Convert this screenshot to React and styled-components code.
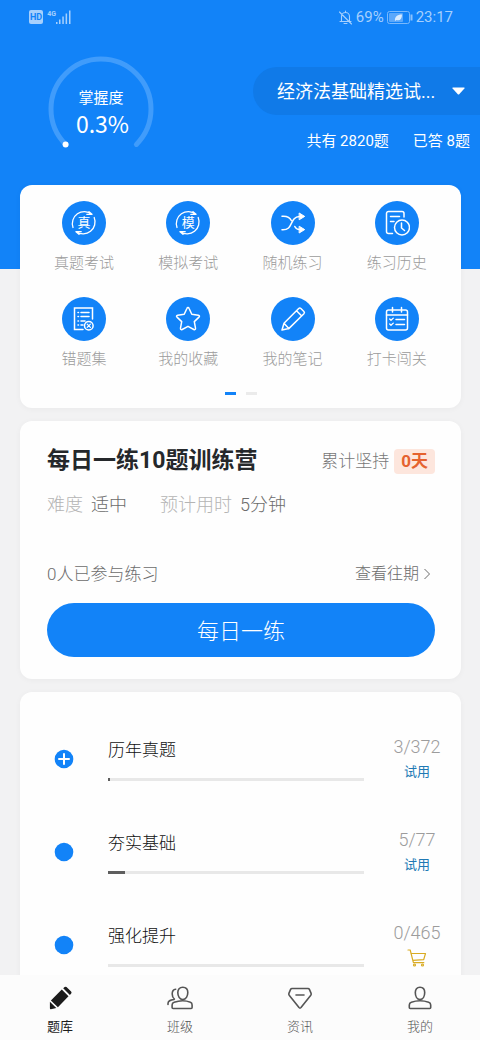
import React from "react";
import styled, { createGlobalStyle } from "styled-components";

const BLUE = "#1283f8";

const GlobalStyle = createGlobalStyle`
  *, *::before, *::after { box-sizing: border-box; }
  body {
    margin: 0;
    background: #f2f2f3;
    font-family: Roboto, "Noto Sans CJK SC", sans-serif;
    color: #222;
  }
  button, select { font-family: inherit; border: 0; margin: 0; padding: 0; background: none; cursor: pointer; }
  a { text-decoration: none; color: inherit; }
  h1, h2, h3, p, ul { margin: 0; padding: 0; font-weight: 400; list-style: none; }
  svg { display: block; }
`;

const Screen = styled.div`
  display: flex;
  flex-direction: column;
  height: 100vh;
`;

const Scroll = styled.main`
  flex: 1;
  min-height: 0;
  overflow-y: auto;
  scrollbar-width: none;
`;

/* ---------- header ---------- */

const Header = styled.header`
  background: ${BLUE};
  color: #fff;
  padding-bottom: 107px;
`;

const StatusBar = styled.div`
  display: flex;
  align-items: center;
  justify-content: space-between;
  height: 34px;
  padding: 0 27px 0 29px;
  color: #a6d0fd;
  font-size: 15px;
  line-height: 20px;
`;

const StatusGroup = styled.div`
  display: flex;
  align-items: center;
  gap: ${(p) => p.$gap}px;
`;

const HeaderRow = styled.div`
  display: flex;
  justify-content: space-between;
  padding: 22px 0 0 48px;
`;

const Gauge = styled.div`
  position: relative;
  width: 106px;
  height: 106px;
`;

const GaugeText = styled.div`
  position: absolute;
  inset: 0;
  display: flex;
  flex-direction: column;
  align-items: center;
  padding-top: 30px;
  font-family: "Noto Sans CJK SC", sans-serif;
`;

const GaugeLabel = styled.span`
  font-size: 15px;
  line-height: 22px;
`;

const GaugeValue = styled.strong`
  padding-left: 3px;
  font-size: 23px;
  line-height: 30px;
  font-weight: 400;
`;

const CourseInfo = styled.div`
  display: flex;
  flex-direction: column;
  width: 227px;
  padding-top: 11px;
`;

const CoursePicker = styled.label`
  display: flex;
  align-items: center;
  height: 48px;
  padding: 0 15px 0 24px;
  border-radius: 24px 0 0 24px;
  background: #107ae8;
`;

const CourseSelect = styled.select`
  flex: 1;
  min-width: 0;
  padding-top: 2px;
  appearance: none;
  color: #fff;
  font-size: 18px;
  line-height: 28px;
  outline: none;
`;

const Stats = styled.div`
  display: flex;
  justify-content: flex-end;
  gap: 24px;
  margin-top: 15px;
  padding-right: 10px;
  font-size: 15px;
  line-height: 22px;
  white-space: nowrap;
`;

/* ---------- cards ---------- */

const Cards = styled.div`
  display: flex;
  flex-direction: column;
  gap: 13px;
  margin-top: -84px;
  padding: 0 19px 20px 20px;
`;

const Card = styled.section`
  background: #fefefe;
  border-radius: 12px;
  padding: ${(p) => p.$pad};
  box-shadow: 0 1px 6px rgba(0, 0, 0, 0.04);
`;

const Shortcuts = styled.nav`
  display: grid;
  grid-template-columns: repeat(4, 1fr);
  row-gap: 23px;
`;

const Shortcut = styled.a`
  display: flex;
  flex-direction: column;
  align-items: center;
  gap: 7px;
  color: #9b9b9b;
  font-size: 15px;
  line-height: 22px;
  font-weight: 300;
`;

const ShortcutDisc = styled.span`
  display: grid;
  place-items: center;
  width: 44px;
  height: 44px;
  border-radius: 50%;
  background: ${BLUE};
  color: #fff;
  > * { grid-area: 1 / 1; }
`;

const DiscGlyph = styled.span`
  font-size: 13px;
  line-height: 18px;
  font-weight: 400;
`;

const Pager = styled.div`
  display: flex;
  justify-content: center;
  gap: 10px;
  margin-top: 22px;
`;

const PagerMark = styled.span`
  width: 11px;
  height: 3px;
  background: ${(p) => (p.$active ? BLUE : "#ebebeb")};
`;

const Row = styled.div`
  display: flex;
  align-items: center;
  justify-content: space-between;
`;

const CampTitle = styled.h2`
  font-size: 23px;
  line-height: 32px;
  font-weight: 700;
  color: #25282b;
`;

const Streak = styled.div`
  display: flex;
  align-items: center;
  gap: 5px;
  font-size: 17px;
  line-height: 25px;
  font-weight: 300;
  color: #777;
`;

const StreakBadge = styled.strong`
  padding: 0 7px;
  border-radius: 4px;
  background: #fde6dd;
  color: #e5622f;
  font-weight: 700;
`;

const Facts = styled.dl`
  display: flex;
  gap: 33px;
  margin: 14px 0 0;
  font-size: 18px;
  line-height: 28px;
  font-weight: 300;
`;

const Fact = styled.div`
  display: flex;
  gap: 8px;
`;

const FactName = styled.dt`
  color: #b4b4b4;
`;

const FactValue = styled.dd`
  margin: 0;
  color: #6c6c6c;
`;

const CampFooter = styled(Row)`
  margin-top: 43px;
  font-size: 17px;
  line-height: 24px;
  font-weight: 300;
  color: #6c6c6c;
`;

const HistoryLink = styled.a`
  display: flex;
  align-items: center;
  gap: 4px;
  padding-right: 4px;
  font-size: 16px;
`;

const PracticeButton = styled.button`
  display: block;
  width: 100%;
  height: 54px;
  margin-top: 17px;
  padding-top: 3px;
  border-radius: 27px;
  background: ${BLUE};
  color: #fff;
  font-size: 22px;
  line-height: 32px;
  font-weight: 300;
`;

/* ---------- chapter list ---------- */

const Chapter = styled.li`
  display: flex;
  align-items: center;
  height: 93px;
`;

const ChapterBody = styled.div`
  flex: 1;
  margin: 0 17px 0 34px;
`;

const ChapterTitle = styled.h3`
  font-size: 17px;
  line-height: 28px;
  font-weight: 300;
  color: #111;
`;

const Track = styled.div`
  height: 3px;
  margin-top: 14px;
  background: #e8e8e8;
`;

const Fill = styled.div`
  height: 3px;
  background: #5e5e5e;
`;

const ChapterSide = styled.div`
  display: flex;
  flex-direction: column;
  align-items: center;
  gap: 3px;
  width: 72px;
`;

const Count = styled.span`
  font-size: 18px;
  line-height: 24px;
  font-weight: 300;
  color: #9c9c9c;
`;

const SideLink = styled.a`
  font-size: 13px;
  line-height: 20px;
  color: #2079b4;
`;

/* ---------- tab bar ---------- */

const TabBar = styled.nav`
  display: grid;
  grid-template-columns: repeat(4, 1fr);
  height: 65px;
  padding-top: 10px;
  background: #fcfcfc;
`;

const Tab = styled.a`
  display: flex;
  flex-direction: column;
  align-items: center;
  gap: 6px;
  font-size: 13px;
  line-height: 20px;
  font-weight: ${(p) => (p.$active ? 400 : 300)};
  color: ${(p) => (p.$active ? "#1c1c1c" : "#555")};
`;

/* ---------- drawings ---------- */

const Line = ({ size = 26, box = 26, width = 1.5, children, ...rest }) => (
  <svg
    width={size}
    height={size}
    viewBox={`0 0 ${box} ${box}`}
    fill="none"
    stroke="currentColor"
    strokeWidth={width}
    strokeLinecap="round"
    strokeLinejoin="round"
    aria-hidden="true"
    {...rest}
  >
    {children}
  </svg>
);

const CycleIcon = ({ glyph }) => (
  <>
    <Line width={1.3}>
      <path d="M2 17.500A12 12 0 0 1 20.800 4.200M21 4.300h-5.200M21 4.300l-3-2.600" />
      <path d="M23.200 7.500A12 12 0 0 1 5.200 21.800M5 21.700h5.200M5 21.700l3 2.600" />
    </Line>
    <DiscGlyph>{glyph}</DiscGlyph>
  </>
);

const ShuffleIcon = () => (
  <Line>
    <path d="M2 6.200c5-.4 8 1.200 9.300 4.300M2 19.800c12 .8 7-12.800 17.500-13.400M14.800 16.500c1 2 2.500 2.900 4.700 3.100" />
    <path d="M19.500 3.200l5.200 3.200-5.200 3.200zM19.500 16.400l5.200 3.200-5.200 3.200z" fill="currentColor" strokeWidth="1" />
  </Line>
);

const HistoryIcon = () => (
  <Line>
    <path d="M8.500 23.500H4.500A2 2 0 0 1 2.500 21.500V3.500A2 2 0 0 1 4.500 1.500H18A2 2 0 0 1 20 3.500V7M6.500 6.500h9M6.500 11.500h3.500" />
    <circle cx="18" cy="17.500" r="7.500" />
    <path d="M17.500 13v5l3 2.500" />
  </Line>
);

const MistakesIcon = () => (
  <Line>
    <path d="M12 23.500H3.500V2H21.500V13" strokeLinejoin="miter" />
    <path d="M7 6.500h.5M10 6.500h8M7 10.500h.5M10 10.500h8M7 15h.5M10 15h4M7 19h.5M10 19h2" />
    <circle cx="17.800" cy="19.800" r="4.300" />
    <path d="M16.200 18.200l3.200 3.200M19.400 18.200l-3.200 3.200" strokeWidth="1.200" />
  </Line>
);

const StarIcon = () => (
  <Line>
    <path d="M13 1.500Q13.700 1.500 14.100 2.500L16.800 8.300L23.300 9.200Q25.200 9.700 24 11.100L19.300 15.600L20.500 22.200Q20.500 24.200 18.800 23.500L13 20.300L7.200 23.500Q5.500 24.200 5.500 22.200L6.700 15.600L2 11.100Q.800 9.700 2.700 9.200L9.200 8.300L11.900 2.500Q12.300 1.500 13 1.500z" />
  </Line>
);

const NotePencilIcon = () => (
  <Line>
    <path d="M2 24l2-6.800L18.700 2.500a1.600 1.600 0 0 1 2.200 0l3 3a1.600 1.600 0 0 1 0 2.200L8.800 22.600zM4 17.200l4.800 5.400M16.500 4.800l5 5" />
  </Line>
);

const CheckInIcon = () => (
  <Line>
    <rect x="2.500" y="4" width="21" height="20" rx="2" />
    <path d="M2.500 9h21M8.500 1.500v4.500M17.500 1.500v4.500M12 13.500h8.500M12 18.500h8.500" />
    <path d="M5.700 13l1.300 1.300 2.300-2.200M5.700 18l1.300 1.300 2.300-2.200" strokeWidth="1.300" />
  </Line>
);

const BulletIcon = ({ expandable }) => (
  <svg width="20" height="20" viewBox="0 0 20 20" aria-hidden="true">
    <circle cx="10" cy="10" r="9.300" fill={BLUE} />
    {expandable && (
      <path d="M10 5v10M5 10h10" stroke="#fff" strokeWidth="2" strokeLinecap="round" />
    )}
  </svg>
);

const CartIcon = () => (
  <Line size={20} box={20} width={1.200} color="#d9ab22">
    <path d="M1 2h2.200l3.200 12.700h10.400M3.900 5.500h14.600l-1.800 6.200-10.900.600" />
    <circle cx="7.500" cy="17" r="1" />
    <circle cx="15.500" cy="17" r="1" />
  </Line>
);

const TabPencilIcon = () => (
  <svg width="26" height="26" viewBox="0 0 26 26" fill="currentColor" aria-hidden="true">
    <path d="M16.200 3.200l1.400-1.200q1-.6 1.900.1l4.600 4.400q.9 1 .1 2l-1.300 1.400zM14.800 4.600l6.700 6.700L10.900 22.300l-7-6.800zM2.900 16.800l6.400 6.200-5.400 1.200q-1.100.1-1-.9z" />
  </svg>
);

const ClassIcon = () => (
  <Line width={1.600}>
    <path d="M15.800 2.200c3.300 0 5 2.200 5 5.300 0 3.500-1.800 7-5 7s-5-3.500-5-7c0-3.100 1.700-5.300 5-5.300z" />
    <path d="M6.100 23.500c-.6 0-1-.4-1-1v-2.400c0-1.400.7-2.400 2-2.800 5.600-2 11.400-2 16.400 0 1.100.4 1.600 1.400 1.600 2.800v2.400c0 .6-.4 1-1 1z" />
    <path d="M8.700 4.200c-2.600.3-3.500 2.200-3.500 4.700 0 2.200.7 3.900 2.200 5.100M7 14.500c-4 .6-6 1.200-6 4v1" />
  </Line>
);

const NewsIcon = () => (
  <Line width={1.600}>
    <path d="M5 3.500h16c.7 0 1.100.3 1.400.9l1.700 4c.3.700.2 1.200-.3 1.800L14 22.600c-.6.7-1.400.7-2 0L2.200 10.200c-.5-.6-.6-1.100-.3-1.800l1.700-4c.3-.6.700-.9 1.400-.9zM9 10h8" />
  </Line>
);

const MeIcon = () => (
  <Line width={1.600}>
    <path d="M13 2.200c3.200 0 4.700 2.200 4.700 5.300 0 3.500-1.600 7-4.700 7s-4.700-3.500-4.700-7c0-3.100 1.500-5.300 4.700-5.300z" />
    <path d="M3.300 23.500c-.6 0-1-.4-1-1v-2.400c0-1.400.7-2.400 2-2.800 5.800-2 11.600-2 17.400 0 1.300.4 2 1.400 2 2.800v2.400c0 .6-.4 1-1 1z" />
  </Line>
);

const HdBadge = styled.span`
  padding: 0 1px;
  border-radius: 2px;
  background: #a6d0fd;
  color: ${BLUE};
  font-size: 9px;
  line-height: 14px;
  font-weight: 700;
`;

const Network = styled.span`
  align-self: flex-start;
  font-size: 7px;
  line-height: 8px;
  font-weight: 700;
`;

const SignalIcon = () => (
  <svg width="15" height="14" viewBox="0 0 15 14" fill="currentColor" aria-hidden="true">
    <path d="M0 12h1.500v2H0zM3 9.500h1.500V14H3zM6.300 6.500h1.500V14H6.300zM9.600 3.500h1.500V14H9.600zM13 .5h1.500V14H13z" />
  </svg>
);

const MutedIcon = () => (
  <Line size={15} box={15} width={1.100}>
    <path d="M2 11.500h11M3.500 11.500V6.500a4 4 0 0 1 8 0v5M7.500 1v1.500M6 13.500h3M1.500 2l12 12" />
  </Line>
);

const BatteryIcon = () => (
  <svg width="26" height="13" viewBox="0 0 26 13" aria-hidden="true">
    <rect x=".5" y=".5" width="22" height="12" rx="2" fill="none" stroke="#7ab9fc" />
    <rect x="2" y="2" width="14" height="9" rx="1" fill="#5ba8fb" />
    <path d="M24.500 3.500v6" stroke="#8cc2fc" strokeWidth="2" />
    <path d="M8 10c-.5-4 2-6.500 7-6.500 0 4.500-2 6.500-5.500 5.500z" fill="#d8ebff" />
  </svg>
);

const GaugeArc = () => (
  <svg width="106" height="106" viewBox="0 0 106 106" fill="none" aria-hidden="true">
    <path
      d="M17.600 88.400A50 50 0 1 1 88.400 88.400"
      stroke="#409cfb"
      strokeWidth="5"
      strokeLinecap="round"
    />
    <circle cx="17.600" cy="88.400" r="3" fill="#fff" />
  </svg>
);

/* ---------- data ---------- */

const shortcuts = [
  { label: "真题考试", icon: <CycleIcon glyph="真" /> },
  { label: "模拟考试", icon: <CycleIcon glyph="模" /> },
  { label: "随机练习", icon: <ShuffleIcon /> },
  { label: "练习历史", icon: <HistoryIcon /> },
  { label: "错题集", icon: <MistakesIcon /> },
  { label: "我的收藏", icon: <StarIcon /> },
  { label: "我的笔记", icon: <NotePencilIcon /> },
  { label: "打卡闯关", icon: <CheckInIcon /> },
];

const chapters = [
  { title: "历年真题", done: 3, total: 372, expandable: true, trial: true },
  { title: "夯实基础", done: 5, total: 77, trial: true },
  { title: "强化提升", done: 0, total: 465 },
];

const tabs = [
  { label: "题库", icon: <TabPencilIcon />, active: true },
  { label: "班级", icon: <ClassIcon /> },
  { label: "资讯", icon: <NewsIcon /> },
  { label: "我的", icon: <MeIcon /> },
];

export default function App() {
  return (
    <Screen>
      <GlobalStyle />
      <Scroll>
        <Header>
          <StatusBar>
            <StatusGroup $gap={4}>
              <HdBadge>HD</HdBadge>
              <StatusGroup $gap={0}>
                <Network>4G</Network>
                <SignalIcon />
              </StatusGroup>
            </StatusGroup>
            <StatusGroup $gap={3}>
              <MutedIcon />
              <span>69%</span>
              <BatteryIcon />
              <span>23:17</span>
            </StatusGroup>
          </StatusBar>
          <HeaderRow>
            <Gauge>
              <GaugeArc />
              <GaugeText>
                <GaugeLabel>掌握度</GaugeLabel>
                <GaugeValue>0.3%</GaugeValue>
              </GaugeText>
            </Gauge>
            <CourseInfo>
              <CoursePicker>
                <CourseSelect aria-label="经济法基础">
                  <option>经济法基础精选试...</option>
                </CourseSelect>
                <svg width="13" height="8" viewBox="0 0 13 8" aria-hidden="true">
                  <path d="M1 .5h11q1 .2.400 1L7.200 7.200q-.7.700-1.400 0L.600 1.500Q0 .7 1 .5z" fill="#fff" />
                </svg>
              </CoursePicker>
              <Stats>
                <span>共有 2820题</span>
                <span>已答 8题</span>
              </Stats>
            </CourseInfo>
          </HeaderRow>
        </Header>

        <Cards>
          <Card $pad="16px 12px 13px">
            <Shortcuts>
              {shortcuts.map((s) => (
                <Shortcut href="#" key={s.label}>
                  <ShortcutDisc>{s.icon}</ShortcutDisc>
                  {s.label}
                </Shortcut>
              ))}
            </Shortcuts>
            <Pager>
              <PagerMark $active />
              <PagerMark />
            </Pager>
          </Card>

          <Card $pad="24px 26px 22px 27px">
            <Row>
              <CampTitle>每日一练10题训练营</CampTitle>
              <Streak>
                累计坚持
                <StreakBadge>0天</StreakBadge>
              </Streak>
            </Row>
            <Facts>
              <Fact>
                <FactName>难度</FactName>
                <FactValue>适中</FactValue>
              </Fact>
              <Fact>
                <FactName>预计用时</FactName>
                <FactValue>5分钟</FactValue>
              </Fact>
            </Facts>
            <CampFooter>
              <span>0人已参与练习</span>
              <HistoryLink href="#">
                查看往期
                <svg width="8" height="12" viewBox="0 0 8 12" fill="none" stroke="currentColor" aria-hidden="true">
                  <path d="M1.500 1l5 5-5 5" />
                </svg>
              </HistoryLink>
            </CampFooter>
            <PracticeButton type="button">每日一练</PracticeButton>
          </Card>

          <Card $pad="20px 8px 20px 34px">
            <ul>
              {chapters.map((c) => (
                <Chapter key={c.title}>
                  <BulletIcon expandable={c.expandable} />
                  <ChapterBody>
                    <ChapterTitle>{c.title}</ChapterTitle>
                    <Track>
                      <Fill style={{ width: `${(c.done / c.total) * 100}%` }} />
                    </Track>
                  </ChapterBody>
                  <ChapterSide>
                    <Count>{`${c.done}/${c.total}`}</Count>
                    <SideLink href="#">{c.trial ? "试用" : <CartIcon />}</SideLink>
                  </ChapterSide>
                </Chapter>
              ))}
            </ul>
          </Card>
        </Cards>
      </Scroll>

      <TabBar>
        {tabs.map((t) => (
          <Tab href="#" key={t.label} $active={t.active}>
            {t.icon}
            {t.label}
          </Tab>
        ))}
      </TabBar>
    </Screen>
  );
}
